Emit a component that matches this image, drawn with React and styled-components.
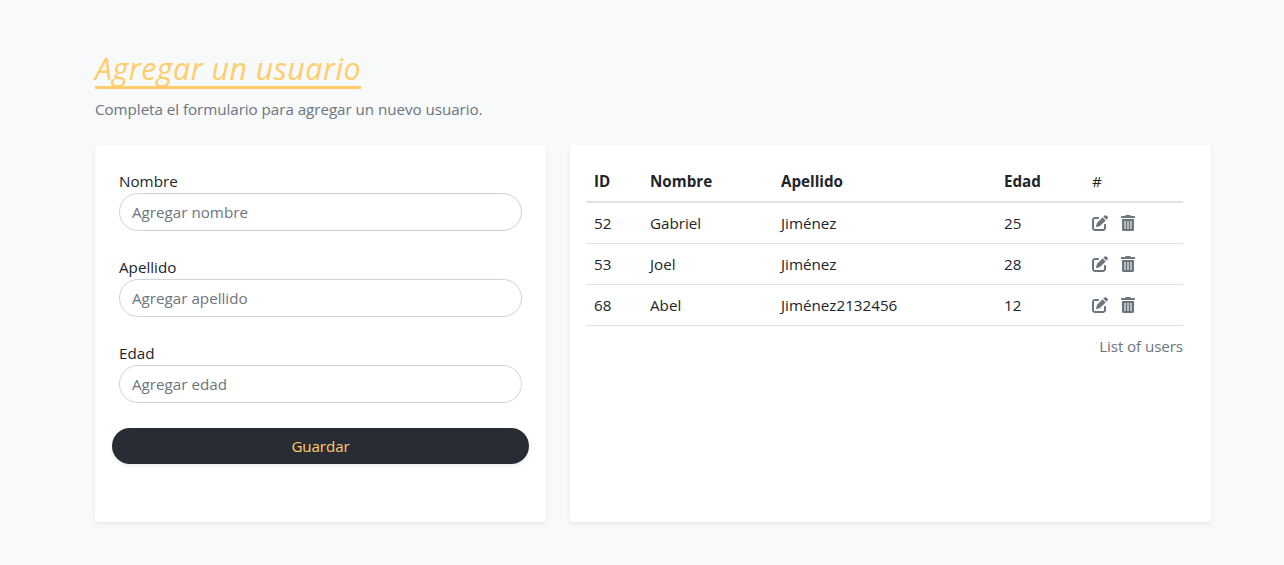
import React from "react";
import styled, { createGlobalStyle } from "styled-components";
import { FaPenToSquare } from "react-icons/fa6";

const GlobalStyle = createGlobalStyle`
  *, *::before, *::after { box-sizing: border-box; }
  body {
    margin: 0;
    background: #f8f9fb;
    color: #212529;
    font-family: "Segoe UI", "Open Sans", "Noto Sans", sans-serif;
    font-size: 15.2px;
    line-height: 24px;
  }
`;

const Page = styled.main`
  height: 565px;
  padding: 50px 73px 43px 95px;
  display: flex;
  flex-direction: column;
`;

const Title = styled.h1`
  margin: 0 0 9px;
  color: #ffce6b;
  font-size: 30.4px;
  font-weight: 400;
  font-style: italic;
  line-height: 38px;
  letter-spacing: 0.46px;
  text-decoration: underline;
  text-decoration-thickness: 3px;
  text-decoration-skip-ink: none;
  text-underline-offset: 6px;
`;

const Lead = styled.p`
  margin: 0 0 24px;
  color: #6c757d;
  letter-spacing: -0.05px;
`;

const Columns = styled.div`
  flex: 1;
  display: grid;
  grid-template-columns: 451px 641px;
  column-gap: 24px;
`;

const Card = styled.section`
  background: #fff;
  border-radius: 4px;
  box-shadow: 0 2px 4px rgba(0, 0, 0, 0.075);
`;

const FormCard = styled(Card)`
  padding: 24px 17px;
`;

const Field = styled.div`
  padding: 0 7px;
  margin-bottom: 24px;
`;

const Label = styled.label`
  display: block;
`;

const Input = styled.input`
  display: block;
  width: 100%;
  height: 38px;
  padding: 0 12px;
  border: 1px solid #ced4da;
  border-radius: 19px;
  background: #fff;
  font: inherit;
  &::placeholder {
    color: #6c757d;
    opacity: 1;
  }
`;

const SaveButton = styled.button`
  display: block;
  width: 100%;
  height: 36px;
  margin-top: 25px;
  border: 0;
  border-radius: 18px;
  background: #282c34;
  color: #ffce6b;
  font: inherit;
  letter-spacing: -0.1px;
  box-shadow: 0 2px 4px rgba(0, 0, 0, 0.075);
`;

const TableCard = styled(Card)`
  padding: 16px 28px 16px 16px;
`;

const Table = styled.table`
  width: 100%;
  table-layout: fixed;
  border-collapse: separate;
  border-spacing: 0;
  caption-side: bottom;
`;

const Caption = styled.caption`
  padding: 8px 0;
  color: #6c757d;
  text-align: right;
  letter-spacing: -0.1px;
`;

const HeadCell = styled.th`
  width: ${(p) => p.$width};
  height: 42px;
  padding: 0 8px;
  border-bottom: 2px solid #dee2e6;
  text-align: left;
  font-weight: ${(p) => (p.$light ? 400 : 700)};
`;

const Cell = styled.td`
  height: 41px;
  padding: 0 8px;
  border-bottom: 1px solid #dee2e6;
`;

const Actions = styled.div`
  display: flex;
  align-items: center;
  gap: 13px;
  color: #6c757d;
`;

const TrashIcon = () => (
  <svg width="14" height="16" viewBox="0 0 14 16" fill="currentColor" aria-hidden="true">
    <path d="M0.5 1H4L4.6 0.3Q4.8 0 5.2 0H8.8Q9.2 0 9.4 0.3L10 1H13.5Q14 1 14 1.5V2.5Q14 3 13.5 3H0.5Q0 3 0 2.5V1.5Q0 1 0.5 1Z" />
    <path d="M1 4H13V14.5Q13 16 11.5 16H2.5Q1 16 1 14.5Z" />
    <path d="M3 6H5V14H3ZM6 6H8V14H6ZM9 6H11V14H9Z" fill="#b5babe" />
  </svg>
);

const fields = [
  { id: "nombre", label: "Nombre", hint: "Agregar nombre" },
  { id: "apellido", label: "Apellido", hint: "Agregar apellido" },
  { id: "edad", label: "Edad", hint: "Agregar edad" },
];

const users = [
  { id: 52, name: "Gabriel", surname: "Jiménez", age: 25 },
  { id: 53, name: "Joel", surname: "Jiménez", age: 28 },
  { id: 68, name: "Abel", surname: "Jiménez2132456", age: 12 },
];

export default function App() {
  return (
    <Page>
      <GlobalStyle />
      <Title>Agregar un usuario</Title>
      <Lead>Completa el formulario para agregar un nuevo usuario.</Lead>
      <Columns>
        <FormCard as="form">
          {fields.map((f) => (
            <Field key={f.id}>
              <Label htmlFor={f.id}>{f.label}</Label>
              <Input id={f.id} placeholder={f.hint} />
            </Field>
          ))}
          <SaveButton type="button">Guardar</SaveButton>
        </FormCard>
        <TableCard>
          <Table>
            <Caption>List of users</Caption>
            <thead>
              <tr>
                <HeadCell $width="56px">ID</HeadCell>
                <HeadCell $width="131px">Nombre</HeadCell>
                <HeadCell $width="223px">Apellido</HeadCell>
                <HeadCell $width="88px">Edad</HeadCell>
                <HeadCell $width="99px" $light>#</HeadCell>
              </tr>
            </thead>
            <tbody>
              {users.map((u) => (
                <tr key={u.id}>
                  <Cell>{u.id}</Cell>
                  <Cell>{u.name}</Cell>
                  <Cell>{u.surname}</Cell>
                  <Cell>{u.age}</Cell>
                  <Cell>
                    <Actions>
                      <FaPenToSquare size={16} />
                      <TrashIcon />
                    </Actions>
                  </Cell>
                </tr>
              ))}
            </tbody>
          </Table>
        </TableCard>
      </Columns>
    </Page>
  );
}
